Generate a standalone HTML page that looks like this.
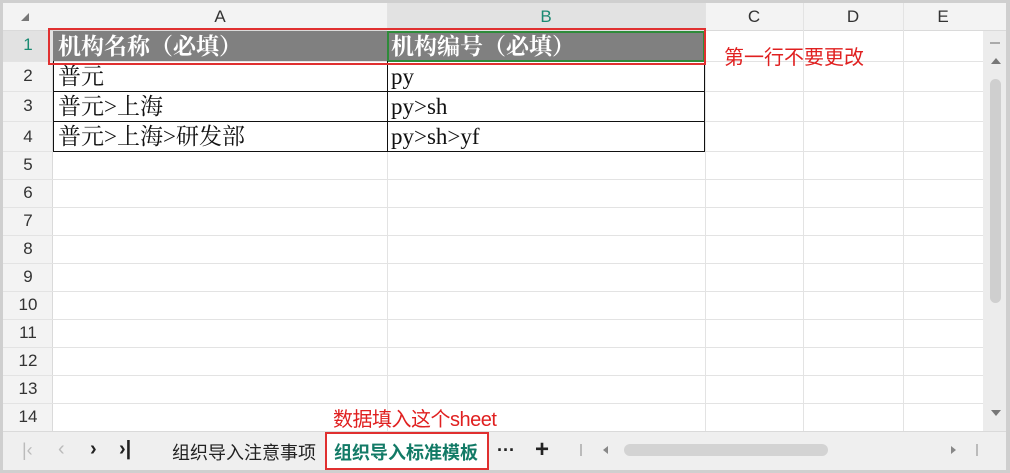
<!DOCTYPE html>
<html><head><meta charset="utf-8"><style>
*{margin:0;padding:0;box-sizing:border-box}
body{width:1010px;height:473px;background:#cfcfcf;position:relative;overflow:hidden;font-family:"Liberation Sans","Noto Sans CJK SC",sans-serif}
.a{position:absolute}
.hl{position:absolute;height:1px;background:#e3e3e3}
.vl{position:absolute;width:1px;background:#e3e3e3}
.rn{position:absolute;left:3px;width:50px;text-align:center;font-size:17px;color:#333}
.ch{position:absolute;top:3px;height:28px;line-height:28px;text-align:center;font-size:17px;color:#333}
.cell{position:absolute;font-family:"Liberation Serif","Noto Serif CJK SC",serif;font-size:23px;color:#111;line-height:30px;white-space:nowrap}
</style></head><body>
<div class="a" style="left:3px;top:3px;width:1003px;height:467px;background:#fff"></div>
<div class="a" style="left:3px;top:3px;width:1003px;height:28px;background:#f3f3f3;border-bottom:1px solid #dadada"></div>
<div class="a" style="left:387px;top:3px;width:318px;height:28px;background:#e2e2e2"></div>
<div class="a" style="left:3px;top:31px;width:50px;height:400px;background:#f3f3f3;border-right:1px solid #dadada"></div>
<div class="a" style="left:3px;top:31px;width:50px;height:30px;background:#e2e2e2"></div>
<div class="a" style="left:21px;top:13px;width:0;height:0;border-left:8px solid transparent;border-bottom:8px solid #777"></div>
<div class="ch" style="left:53px;width:334px">A</div>
<div class="ch" style="left:387px;width:318px;color:#1a8a72">B</div>
<div class="ch" style="left:705px;width:98px">C</div>
<div class="ch" style="left:803px;width:100px">D</div>
<div class="ch" style="left:903px;width:80px">E</div>
<div class="vl" style="left:387px;top:3px;height:428px"></div>
<div class="vl" style="left:705px;top:3px;height:428px"></div>
<div class="vl" style="left:803px;top:3px;height:428px"></div>
<div class="vl" style="left:903px;top:3px;height:428px"></div>
<div class="hl" style="left:3px;top:61px;width:980px"></div>
<div class="hl" style="left:3px;top:91px;width:980px"></div>
<div class="hl" style="left:3px;top:121px;width:980px"></div>
<div class="hl" style="left:3px;top:151px;width:980px"></div>
<div class="hl" style="left:3px;top:179px;width:980px"></div>
<div class="hl" style="left:3px;top:207px;width:980px"></div>
<div class="hl" style="left:3px;top:235px;width:980px"></div>
<div class="hl" style="left:3px;top:263px;width:980px"></div>
<div class="hl" style="left:3px;top:291px;width:980px"></div>
<div class="hl" style="left:3px;top:319px;width:980px"></div>
<div class="hl" style="left:3px;top:347px;width:980px"></div>
<div class="hl" style="left:3px;top:375px;width:980px"></div>
<div class="hl" style="left:3px;top:403px;width:980px"></div>
<div class="rn" style="top:35px;color:#1a8a72">1</div>
<div class="rn" style="top:66px">2</div>
<div class="rn" style="top:96px">3</div>
<div class="rn" style="top:127px">4</div>
<div class="rn" style="top:155px">5</div>
<div class="rn" style="top:183px">6</div>
<div class="rn" style="top:211px">7</div>
<div class="rn" style="top:239px">8</div>
<div class="rn" style="top:267px">9</div>
<div class="rn" style="top:295px">10</div>
<div class="rn" style="top:323px">11</div>
<div class="rn" style="top:351px">12</div>
<div class="rn" style="top:379px">13</div>
<div class="rn" style="top:407px">14</div>
<div class="a" style="left:53px;top:31px;width:652px;height:30px;background:#808080"></div>
<div class="a" style="left:387px;top:31px;width:318px;height:31px;border:2px solid #2e8b3a"></div>
<div class="a" style="left:53px;top:61px;width:652px;height:91px;border:1px solid #111;border-top:none"></div>
<div class="a" style="left:53px;top:91px;width:652px;height:1px;background:#111"></div>
<div class="a" style="left:53px;top:121px;width:652px;height:1px;background:#111"></div>
<div class="a" style="left:387px;top:61px;width:1px;height:91px;background:#111"></div>
<div class="cell" style="left:58px;top:32px;color:#fff;font-weight:bold">机构名称（必填）</div>
<div class="cell" style="left:391px;top:32px;color:#fff;font-weight:bold">机构编号（必填）</div>
<div class="cell" style="left:58px;top:62px">普元</div>
<div class="cell" style="left:391px;top:62px">py</div>
<div class="cell" style="left:58px;top:92px">普元&gt;上海</div>
<div class="cell" style="left:391px;top:92px">py&gt;sh</div>
<div class="cell" style="left:58px;top:122px">普元&gt;上海&gt;研发部</div>
<div class="cell" style="left:391px;top:122px">py&gt;sh&gt;yf</div>
<div class="a" style="left:48px;top:28px;width:658px;height:37px;border:2px solid #e03030"></div>
<div class="a" style="left:724px;top:41px;font-size:20px;color:#e02020">第一行不要更改</div>
<div class="a" style="left:983px;top:31px;width:23px;height:400px;background:#ececec"></div>
<div class="a" style="left:990px;top:42px;width:10px;height:2px;background:#aaa"></div>
<div class="a" style="left:991px;top:58px;border-left:5px solid transparent;border-right:5px solid transparent;border-bottom:6px solid #777"></div>
<div class="a" style="left:990px;top:79px;width:11px;height:224px;border-radius:6px;background:#cfcfcf"></div>
<div class="a" style="left:991px;top:410px;border-left:5px solid transparent;border-right:5px solid transparent;border-top:6px solid #777"></div>
<div class="a" style="left:3px;top:431px;width:1003px;height:39px;background:#efefef;border-top:1px solid #dadada"></div>
<div class="a" style="left:22px;top:440px;font-size:18px;color:#bbb">|&lsaquo;</div>
<div class="a" style="left:58px;top:438px;font-size:20px;color:#bbb">&lsaquo;</div>
<div class="a" style="left:90px;top:438px;font-size:20px;color:#222;font-weight:bold">&rsaquo;</div>
<div class="a" style="left:119px;top:438px;font-size:20px;color:#222;font-weight:bold">&rsaquo;|</div>
<div class="a" style="left:172px;top:439px;font-size:18px;color:#222">组织导入注意事项</div>
<div class="a" style="left:325px;top:432px;width:164px;height:38px;background:#fff;border:2px solid #e03030"></div>
<div class="a" style="left:334px;top:439px;font-size:18px;color:#127a66;font-weight:bold">组织导入标准模板</div>
<div class="a" style="left:333px;top:408px;font-size:20px;color:#e02020;line-height:24px;letter-spacing:-0.5px">数据填入这个sheet</div>
<div class="a" style="left:497px;top:440px;font-size:18px;color:#222;font-weight:bold">···</div>
<div class="a" style="left:535px;top:436px;font-size:24px;color:#222;font-weight:bold">+</div>
<div class="a" style="left:580px;top:444px;width:2px;height:12px;background:#bbb"></div>
<div class="a" style="left:603px;top:446px;border-top:4px solid transparent;border-bottom:4px solid transparent;border-right:5px solid #888"></div>
<div class="a" style="left:624px;top:444px;width:204px;height:12px;border-radius:6px;background:#d3d3d3"></div>
<div class="a" style="left:951px;top:446px;border-top:4px solid transparent;border-bottom:4px solid transparent;border-left:5px solid #888"></div>
<div class="a" style="left:976px;top:444px;width:2px;height:12px;background:#bbb"></div>
</body></html>
